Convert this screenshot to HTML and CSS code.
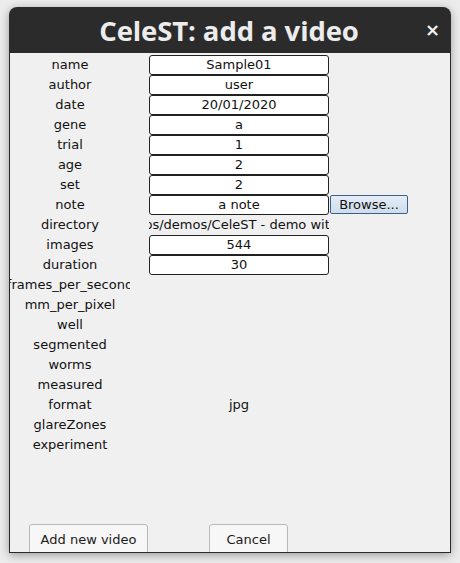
FILE: index.html
```html
<!DOCTYPE html>
<html>
<head>
<meta charset="utf-8">
<link rel="stylesheet" href="styles.css">
</head>
<body>
<div class="window">
  <div class="titlebar">
    <span class="title">CeleST: add a video</span>
    <span class="close">×</span>
  </div>
  <div class="content">
    <div class="form">
      <div class="label">name</div><div class="field">Sample01</div><div></div>
      <div class="label">author</div><div class="field">user</div><div></div>
      <div class="label">date</div><div class="field">20/01/2020</div><div></div>
      <div class="label">gene</div><div class="field">a</div><div></div>
      <div class="label">trial</div><div class="field">1</div><div></div>
      <div class="label">age</div><div class="field">2</div><div></div>
      <div class="label">set</div><div class="field">2</div><div></div>
      <div class="label">note</div><div class="field">a note</div><div class="browse-cell"><button class="browse">Browse...</button></div>
      <div class="label">directory</div><div class="value dir"><span>ps/demos/CeleST - demo with</span></div><div></div>
      <div class="label">images</div><div class="field">544</div><div></div>
      <div class="label">duration</div><div class="field">30</div><div></div>
      <div class="label clip"><span>frames_per_second</span></div><div></div><div></div>
      <div class="label">mm_per_pixel</div><div></div><div></div>
      <div class="label">well</div><div></div><div></div>
      <div class="label">segmented</div><div></div><div></div>
      <div class="label">worms</div><div></div><div></div>
      <div class="label">measured</div><div></div><div></div>
      <div class="label">format</div><div class="value">jpg</div><div></div>
      <div class="label">glareZones</div><div></div><div></div>
      <div class="label">experiment</div><div></div><div></div>
    </div>
    <div class="actions">
      <button class="btn add">Add new video</button>
      <button class="btn cancel">Cancel</button>
    </div>
  </div>
</div>
</body>
</html>
```

FILE: styles.css
```css
html, body {
  margin: 0;
  padding: 0;
}
body {
  background: #ececec;
  width: 460px;
  height: 563px;
  overflow: hidden;
  font-family: "DejaVu Sans", sans-serif;
  font-size: 13px;
  color: #1a1a1a;
}
.window {
  margin: 7px 0 0 9px;
  width: 442px;
  box-shadow: 0 2px 10px rgba(0,0,0,0.35);
  border-radius: 8px 8px 0 0;
}
.titlebar {
  height: 46px;
  background: #2b2b2b;
  border-radius: 8px 8px 0 0;
  display: flex;
  align-items: center;
  justify-content: center;
  position: relative;
}
.title {
  font-family: "Open Sans", sans-serif;
  font-weight: 700;
  font-size: 27.5px;
  color: #ececec;
  letter-spacing: -0.1px;
  margin-left: -2px;
}
.close {
  position: absolute;
  right: 11px;
  top: 12px;
  font-family: "DejaVu Sans", sans-serif;
  font-weight: 700;
  font-size: 18px;
  color: #f0f0f0;
}
.content {
  background: #f0f0f0;
  border: 1px solid #2a2a2a;
  border-top: none;
  height: 500px;
  box-sizing: border-box;
  overflow: hidden;
  padding-top: 2px;
}
.form {
  display: grid;
  grid-template-columns: 120px 19px 180px auto;
  grid-auto-rows: 20px;
}
.form > .label { grid-column: 1; }
.form > .label + div { grid-column: 3; }
.form > .label + div + div { grid-column: 4; }
.label {
  text-align: center;
  line-height: 20px;
  white-space: nowrap;
  overflow: hidden;
  color: #111;
}
.label.clip {
  display: flex;
  justify-content: center;
}
.label.clip span { flex-shrink: 0; }
.field {
  background: #ffffff;
  border: 1px solid #222;
  border-radius: 3px;
  box-sizing: border-box;
  text-align: center;
  line-height: 18px;
  color: #111;
}
.value {
  text-align: center;
  line-height: 20px;
  color: #111;
}
.value.dir {
  overflow: hidden;
  white-space: nowrap;
  display: flex;
  justify-content: flex-end;
}
.value.dir span {
  flex-shrink: 0;
  margin-right: -9px;
}
.browse-cell {
  padding-left: 1px;
}
.browse {
  font-family: "DejaVu Sans", sans-serif;
  font-size: 13px;
  color: #111;
  width: 78px;
  height: 19px;
  padding: 0;
  background: linear-gradient(#e4edf6, #cfdcea);
  border: 1px solid #3d5f8a;
  border-radius: 2px;
  line-height: 17px;
}
.actions {
  display: flex;
  gap: 61px;
  padding-left: 19px;
  margin-top: 69px;
}
.btn {
  font-family: "DejaVu Sans", sans-serif;
  font-size: 13px;
  color: #1a1a1a;
  height: 31px;
  background: #f7f7f7;
  border: 1px solid #b9b9b9;
  border-radius: 3px;
  padding: 0;
}
.btn.add { width: 119px; }
.btn.cancel { width: 79px; }
```
